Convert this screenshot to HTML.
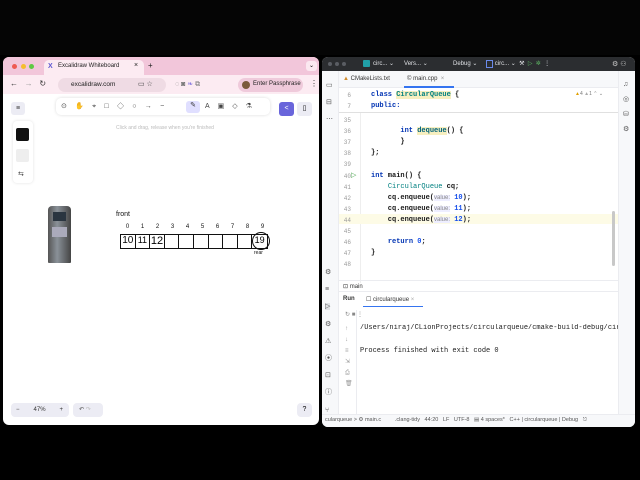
<!DOCTYPE html><html><head><style>
*{margin:0;padding:0;box-sizing:border-box}
body{width:640px;height:480px;background:#000;position:relative;overflow:hidden;font-family:"Liberation Sans",sans-serif}
.a{position:absolute}
.mono{font-family:"Liberation Mono",monospace}
.ln{position:absolute;left:341px;width:10px;text-align:right;font-size:6px;color:#999;font-family:"Liberation Mono",monospace}
.cd{position:absolute;left:371px;font-size:7px;color:#1a1a1a;font-family:"Liberation Mono",monospace;font-weight:bold;white-space:pre}
.kw{color:#0033b3}
.cl{color:#008080;font-weight:normal}
.hint{font-family:"Liberation Sans";font-weight:normal;color:#888;font-size:6px;background:#eef}
.num{color:#1750eb}
</style></head><body>
<div class="a" style="left:0;top:0;width:640px;height:55px;background:#050505"></div>
<!-- Browser -->
<div class="a" style="left:3px;top:57px;width:316px;height:368px;background:#fff;border-radius:6px;overflow:hidden">
 <div class="a" style="left:0;top:0;width:316px;height:18px;background:#f2c6da"></div>
 <div class="a" style="left:9px;top:7px;width:5px;height:5px;border-radius:50%;background:#ee5a52"></div>
 <div class="a" style="left:18px;top:7px;width:5px;height:5px;border-radius:50%;background:#f5bd2f"></div>
 <div class="a" style="left:26px;top:7px;width:5px;height:5px;border-radius:50%;background:#5ec943"></div>
 <div class="a" style="left:41px;top:3px;width:100px;height:15px;background:#fcebf2;border-radius:5px 5px 0 0"></div>
 <div class="a" style="left:45px;top:6px;font-size:7px;color:#5b57d1;font-weight:bold">X</div>
 <div class="a" style="left:55px;top:6px;font-size:6px;color:#222">Excalidraw Whiteboard</div>
 <div class="a" style="left:131px;top:5px;font-size:7px;color:#222">×</div>
 <div class="a" style="left:145px;top:4px;font-size:8px;color:#222">+</div>
 <div class="a" style="left:303px;top:4px;width:11px;height:10px;background:#fbe8f0;border-radius:3px;font-size:6px;text-align:center;line-height:10px">⌄</div>
 <div class="a" style="left:0;top:18px;width:316px;height:19px;background:#fcebf2"></div>
 <div class="a" style="left:7px;top:22px;font-size:8px;color:#333">←&nbsp;&nbsp;&nbsp;<span style="color:#999">→</span>&nbsp;&nbsp;&nbsp;↻</div>
 <div class="a" style="left:55px;top:21px;width:108px;height:14px;background:#efdbe4;border-radius:7px"></div>
 <div class="a" style="left:68px;top:24px;font-size:6.5px;color:#222">excalidraw.com</div>
 <div class="a" style="left:135px;top:23px;font-size:7px;color:#444">▭ ☆</div>
 <div class="a" style="left:172px;top:23px;font-size:7px;color:#777">◌ ◙ <span style="color:#8a7be0">❧</span> ⧉</div>
 <div class="a" style="left:235px;top:21px;width:65px;height:14px;background:#efcadb;border-radius:7px"></div>
 <div class="a" style="left:239px;top:24px;width:8px;height:8px;border-radius:50%;background:#7a5a3a"></div>
 <div class="a" style="left:250px;top:24px;font-size:6px;color:#222">Enter Passphrase</div>
 <div class="a" style="left:307px;top:22px;font-size:8px;color:#333">⋮</div>
 <div class="a" style="left:8px;top:45px;width:14px;height:13px;background:#ececf4;border-radius:3px;font-size:7px;text-align:center;line-height:13px;color:#333">≡</div>
 <div class="a" style="left:53px;top:41px;width:214px;height:17px;background:#fff;border-radius:5px;box-shadow:0 0 3px rgba(0,0,0,.15)"></div>
 <div class="a" style="left:58px;top:45px;font-size:7px;color:#444;letter-spacing:8.3px;white-space:nowrap">⊙✋⌖□◇○→−</div>
 <div class="a" style="left:183px;top:44px;width:14px;height:12px;background:#e0dfff;border-radius:3px;font-size:7px;text-align:center;color:#333">✎</div>
 <div class="a" style="left:202px;top:45px;font-size:7px;color:#444;letter-spacing:8px;white-space:nowrap">A▣◇⚗</div>
 <div class="a" style="left:276px;top:45px;width:15px;height:14px;background:#6965db;border-radius:3px;color:#fff;font-size:7px;text-align:center;line-height:14px">&lt;</div>
 <div class="a" style="left:294px;top:45px;width:15px;height:14px;background:#ececf4;border-radius:3px;font-size:7px;text-align:center;line-height:14px">▯</div>
 <div class="a" style="left:113px;top:68px;font-size:5px;color:#bbb">Click and drag, release when you're finished</div>
 <div class="a" style="left:10px;top:64px;width:20px;height:62px;background:#fff;border-radius:4px;box-shadow:0 0 3px rgba(0,0,0,.12)"></div>
 <div class="a" style="left:13px;top:71px;width:13px;height:13px;background:#111;border-radius:2px"></div>
 <div class="a" style="left:13px;top:92px;width:13px;height:13px;background:#eee;border-radius:2px"></div>
 <div class="a" style="left:15px;top:113px;font-size:7px;color:#444">⇆</div>
 <div class="a" style="left:45px;top:149px;width:23px;height:57px;background:linear-gradient(90deg,#555,#8a9198 40%,#444);border-radius:4px 4px 1px 1px"></div>
 <div class="a" style="left:50px;top:155px;width:13px;height:9px;background:#2a3540"></div>
 <div class="a" style="left:49px;top:170px;width:15px;height:10px;background:#aab"></div>
 <div class="a" style="left:113px;top:154px;font-size:7px;color:#111">front</div>
 <div class="a" style="left:117px;top:167px;width:150px;font-size:6px;color:#111;display:flex">
  <span style="width:15px;text-align:center">0</span><span style="width:15px;text-align:center">1</span><span style="width:15px;text-align:center">2</span><span style="width:15px;text-align:center">3</span><span style="width:15px;text-align:center">4</span><span style="width:15px;text-align:center">5</span><span style="width:15px;text-align:center">6</span><span style="width:15px;text-align:center">7</span><span style="width:15px;text-align:center">8</span><span style="width:15px;text-align:center">9</span></div>
 <div class="a" style="left:117px;top:177px;width:148px;height:15px;display:flex;border:1px solid #111">
  <span style="width:14.8px;border-right:1px solid #111;font-size:10px;text-align:center">10</span><span style="width:14.8px;border-right:1px solid #111;font-size:9px;text-align:center">11</span><span style="width:14.8px;border-right:1px solid #111;font-size:11px;text-align:center">12</span><span style="width:14.8px;border-right:1px solid #111"></span><span style="width:14.8px;border-right:1px solid #111"></span><span style="width:14.8px;border-right:1px solid #111"></span><span style="width:14.8px;border-right:1px solid #111"></span><span style="width:14.8px;border-right:1px solid #111"></span><span style="width:14.8px;border-right:1px solid #111"></span><span style="width:14.8px;font-size:9px;text-align:center">19</span></div>
 <div class="a" style="left:249px;top:175px;width:18px;height:18px;border:1px solid #111;border-radius:50%"></div>
 <div class="a" style="left:251px;top:193px;font-size:5px;color:#111">rear</div>
 <div class="a" style="left:8px;top:346px;width:58px;height:14px;background:#ececf4;border-radius:4px;font-size:6px;color:#333;line-height:14px"><span style="margin-left:5px">−</span><span style="margin-left:14px">47%</span><span style="margin-left:14px">+</span></div>
 <div class="a" style="left:70px;top:346px;width:30px;height:14px;background:#ececf4;border-radius:4px;font-size:6px;color:#555;line-height:14px;padding-left:6px">↶ <span style="color:#bbb">↷</span></div>
 <div class="a" style="left:294px;top:346px;width:15px;height:14px;background:#ececf4;border-radius:4px;font-size:7px;text-align:center;line-height:14px">?</div>
</div>
<!-- CLion -->
<div class="a" style="left:322px;top:57px;width:313px;height:370px;background:#fff;border-radius:6px;overflow:hidden">
 <div class="a" style="left:0;top:0;width:313px;height:14px;background:#2b2d30"></div>
 <div class="a" style="left:6px;top:5px;width:4px;height:4px;border-radius:50%;background:#5a5d63;box-shadow:7px 0 #5a5d63,14px 0 #5a5d63"></div>
 <div class="a" style="left:41px;top:3px;width:7px;height:7px;background:#21a0a8;border-radius:1px"></div>
 <div class="a" style="left:51px;top:3px;font-size:6px;color:#dfe1e5;white-space:nowrap">circ... ⌄&nbsp;&nbsp;&nbsp;&nbsp;&nbsp;&nbsp;Vers... ⌄</div>
 <div class="a" style="left:131px;top:3px;font-size:6px;color:#dfe1e5;white-space:nowrap">Debug ⌄&nbsp;&nbsp;&nbsp;&nbsp;&nbsp;<span style="border:1px solid #6a8aea;padding:0 2px;font-size:5px">&nbsp;</span> circ... ⌄&nbsp;&nbsp;⚒&nbsp;&nbsp;<span style="color:#5fb865">▷&nbsp;&nbsp;✲</span>&nbsp;&nbsp;⋮</div>
 <div class="a" style="left:290px;top:3px;font-size:7px;color:#ccc">⚙ ⚇</div>
 <div class="a" style="left:0;top:14px;width:17px;height:347px;background:#f7f8fa;border-right:1px solid #ebecf0"></div>
 <div class="a" style="left:4px;top:20px;font-size:7px;color:#555;line-height:17px">▭<br>⊟<br>⋯</div>
 <div class="a" style="left:3px;top:207px;font-size:7px;color:#555;line-height:17.2px">⚙<br>≡<br><span style="background:#dfe1e5">▷</span><br>⚙<br>⚠<br>⦿<br>⊡<br>ⓘ<br>⑂</div>
 <div class="a" style="left:296px;top:14px;width:17px;height:347px;background:#f7f8fa;border-left:1px solid #ebecf0"></div>
 <div class="a" style="left:301px;top:20px;font-size:7px;color:#555;line-height:15px">♫<br>◎<br>⛁<br>⚙</div>
 <div class="a" style="left:17px;top:14px;width:279px;height:17px;background:#f7f8fa;border-bottom:1px solid #ebecf0"></div>
 <div class="a" style="left:21px;top:19px;font-size:6px;color:#333;white-space:nowrap"><span style="color:#d08a2a">▲</span> CMakeLists.txt</div>
 <div class="a" style="left:85px;top:19px;font-size:6px;color:#333;white-space:nowrap">© main.cpp&nbsp;&nbsp;<span style="color:#999">×</span></div>
 <div class="a" style="left:82px;top:29px;width:50px;height:2px;background:#3574f0"></div>
 <div class="a" style="left:253px;top:34px;font-size:5px;color:#777;white-space:nowrap"><span style="color:#e0a000">▲</span>4 <span style="color:#aaa">▲</span>1 ⌃ ⌄</div>
 <div class="a" style="left:17px;top:55px;width:279px;height:1px;background:#e0e0e0"></div>
 <div class="a" style="left:38px;top:56px;width:1px;height:170px;background:#eee"></div>
 <div class="a" style="left:17px;top:157px;width:279px;height:10px;background:#fdfbe6"></div>
 <div class="a" style="left:290px;top:154px;width:3px;height:55px;background:#c8c8c8;border-radius:2px"></div>
</div>
<div class="ln" style="top:92px">6</div><div class="cd" style="top:91px"><span class="kw">class</span> <span style="color:#008080;background:#f7efc0">CircularQueue</span> {</div>
<div class="ln" style="top:103px">7</div><div class="cd kw" style="top:102px">public:</div>
<div class="ln" style="top:117px">35</div>
<div class="ln" style="top:128px">36</div><div class="cd" style="top:127px">       <span class="kw">int</span> <span style="background:#f7efc0;color:#00627a">dequeue</span>() {</div>
<div class="ln" style="top:139px">37</div><div class="cd" style="top:138px">       }</div>
<div class="ln" style="top:150px">38</div><div class="cd" style="top:149px">};</div>
<div class="ln" style="top:161px">39</div>
<div class="ln" style="top:173px">40</div><div class="a" style="left:351px;top:171px;font-size:7px;color:#4aa44e">▷</div><div class="cd" style="top:172px"><span class="kw">int</span> main() {</div>
<div class="ln" style="top:184px">41</div><div class="cd" style="top:183px">    <span class="cl">CircularQueue</span> cq;</div>
<div class="ln" style="top:195px">42</div><div class="cd" style="top:194px">    cq.enqueue(<span class="hint">value:</span> <span class="num">10</span>);</div>
<div class="ln" style="top:206px">43</div><div class="cd" style="top:205px">    cq.enqueue(<span class="hint">value:</span> <span class="num">11</span>);</div>
<div class="ln" style="top:217px">44</div><div class="cd" style="top:216px">    cq.enqueue(<span class="hint">value:</span> <span class="num">12</span>);</div>
<div class="ln" style="top:228px">45</div>
<div class="ln" style="top:239px">46</div><div class="cd" style="top:238px">    <span class="kw">return</span> <span class="num">0</span>;</div>
<div class="ln" style="top:250px">47</div><div class="cd" style="top:249px">}</div>
<div class="ln" style="top:261px">48</div>
<div class="a" style="left:339px;top:280px;width:279px;height:12px;border-top:1px solid #ebecf0;border-bottom:1px solid #ebecf0;font-size:6px;color:#333;padding:2px 4px">⊡ main</div>
<div class="a" style="left:343px;top:296px;font-size:6px;color:#333;font-weight:bold">Run</div>
<div class="a" style="left:366px;top:296px;font-size:6px;color:#333">☐ circularqueue <span style="color:#aaa">×</span></div>
<div class="a" style="left:363px;top:306px;width:60px;height:1px;background:#3574f0"></div>
<div class="a" style="left:345px;top:311px;font-size:6px;color:#888">↻ ■ ⋮</div>
<div class="a" style="left:345px;top:324px;font-size:6px;color:#999;line-height:11px">↑<br>↓<br>≡<br>⇲<br>⎙<br>🗑</div>
<div class="a" style="left:356px;top:310px;width:1px;height:105px;background:#ebecf0"></div>
<div class="a mono" style="left:360px;top:324px;font-size:7px;color:#222;white-space:nowrap;width:258px;overflow:hidden">/Users/niraj/CLionProjects/circularqueue/cmake-build-debug/circularqueue</div>
<div class="a mono" style="left:360px;top:347px;font-size:7px;color:#222">Process finished with exit code 0</div>
<div class="a" style="left:322px;top:414px;width:313px;height:13px;background:#f7f8fa;border-top:1px solid #ebecf0;border-radius:0 0 6px 6px"></div>
<div class="a" style="left:325px;top:417px;font-size:5.5px;color:#555;white-space:nowrap">cularqueue &gt; ⚙ main.c&nbsp;&nbsp;&nbsp;&nbsp;&nbsp;&nbsp;&nbsp;&nbsp;&nbsp;.clang-tidy&nbsp;&nbsp;&nbsp;44:20&nbsp;&nbsp;&nbsp;LF&nbsp;&nbsp;&nbsp;UTF-8&nbsp;&nbsp;&nbsp;▤ 4 spaces*&nbsp;&nbsp;&nbsp;C++ | circularqueue | Debug&nbsp;&nbsp;&nbsp;⎋</div>
</body></html>
